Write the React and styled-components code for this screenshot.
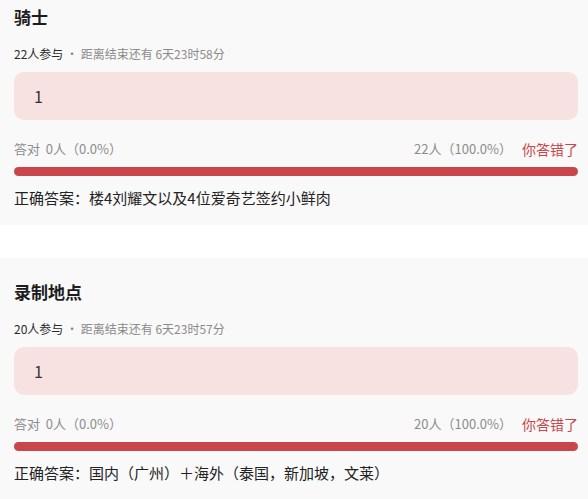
import React from "react";
import styled, { createGlobalStyle } from "styled-components";

const GlobalStyle = createGlobalStyle`
  body {
    margin: 0;
    background: #ffffff;
    font-family: "Noto Sans CJK SC", "Noto Sans", "Liberation Sans", sans-serif;
  }
`;

const Page = styled.div`
  display: flex;
  flex-direction: column;
  gap: 33px;
  width: 588px;
  height: 499px;
  overflow: hidden;
`;

const Card = styled.div`
  background: #f9f9f9;
  padding: ${(p) => p.$top}px 10px 16px 14px;
  display: flex;
  flex-direction: column;
`;

const Title = styled.div`
  font-size: 17px;
  font-weight: 700;
  line-height: 24px;
  color: #1c1c1c;
`;

const Meta = styled.div`
  margin-top: 16px;
  font-size: 12px;
  line-height: 18px;
  color: #8a8a8a;

  b {
    font-weight: 400;
    color: #2a2a2a;
  }
`;

const AnswerBox = styled.div`
  margin-top: 9px;
  height: 48px;
  border-radius: 10px;
  background: #f8e1e1;
  display: flex;
  align-items: center;
  padding-left: 20px;
  font-size: 16px;
  color: #333;
`;

const Stats = styled.div`
  margin-top: 19px;
  display: flex;
  justify-content: space-between;
  align-items: center;
  line-height: 20px;
  font-size: 13px;
  color: #8c8c8c;
`;

const Right = styled.div`
  display: flex;
  align-items: center;
  gap: 10px;
`;

const Wrong = styled.span`
  font-size: 14px;
  color: #c8474a;
`;

const Bar = styled.div`
  margin-top: 8px;
  height: 9px;
  border-radius: 5px;
  background: #c9464a;
`;

const Correct = styled.div`
  margin-top: 11px;
  font-size: 15px;
  line-height: 22px;
  color: #222;
`;

const items = [
  {
    title: "骑士",
    count: 22,
    left: "6天23时58分",
    answer: "楼4刘耀文以及4位爱奇艺签约小鲜肉",
    top: 5,
  },
  {
    title: "录制地点",
    count: 20,
    left: "6天23时57分",
    answer: "国内（广州）＋海外（泰国，新加坡，文莱）",
    top: 22,
  },
];

export default function App() {
  return (
    <>
      <GlobalStyle />
      <Page>
        {items.map((it) => (
          <Card key={it.title} $top={it.top}>
            <Title>{it.title}</Title>
            <Meta>
              <b>{it.count}人参与</b> · 距离结束还有 {it.left}
            </Meta>
            <AnswerBox>1</AnswerBox>
            <Stats>
              <span>答对&nbsp; 0人（0.0%）</span>
              <Right>
                <span>{it.count}人（100.0%）</span>
                <Wrong>你答错了</Wrong>
              </Right>
            </Stats>
            <Bar />
            <Correct>正确答案：{it.answer}</Correct>
          </Card>
        ))}
      </Page>
    </>
  );
}
